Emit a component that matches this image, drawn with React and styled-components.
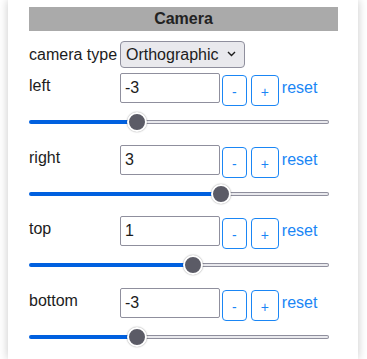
import React, { useState } from "react";
import styled, { createGlobalStyle } from "styled-components";

const GlobalStyle = createGlobalStyle`
  body {
    margin: 0;
    background: #fff;
    font-family: "Segoe UI", "Liberation Sans", Arial, sans-serif;
    font-size: 16px;
    color: #1c1c1c;
  }
`;

const Panel = styled.div`
  box-sizing: border-box;
  width: 350px;
  min-height: 100vh;
  margin-left: 8px;
  padding: 7px 20px 0 21px;
  background: #fff;
  box-shadow: 0 0 9px rgba(0, 0, 0, 0.22);
`;

const Header = styled.div`
  height: 24px;
  line-height: 24px;
  background: #aaaaaa;
  text-align: center;
  font-weight: bold;
  color: #222;
`;

const TypeRow = styled.div`
  display: flex;
  align-items: center;
  margin-top: 10px;
`;

const Label = styled.div`
  width: 91px;
  flex-shrink: 0;
  padding-top: ${(p) => (p.$top ? "4px" : "0")};
`;

const SelectWrap = styled.div`
  position: relative;
  width: 125px;
  height: 27px;
`;

const Select = styled.select`
  appearance: none;
  box-sizing: border-box;
  width: 100%;
  height: 100%;
  padding: 0 0 0 5px;
  border: 1px solid #8f8f9d;
  border-radius: 4px;
  background: #e9e9ed;
  font: inherit;
  color: #1c1c1c;
`;

const Chevron = styled.svg`
  position: absolute;
  right: 9px;
  top: 10px;
  pointer-events: none;
`;

const Param = styled.div`
  margin-top: ${(p) => (p.$first ? "5px" : "0")};
  margin-bottom: 12.5px;
`;

const ParamRow = styled.div`
  display: flex;
  align-items: flex-start;
  height: 33px;
`;

const NumberInput = styled.input`
  box-sizing: border-box;
  width: 100px;
  height: 30px;
  padding: 0 4px;
  border: 1px solid #8f8f9d;
  border-radius: 2px;
  font: inherit;
  color: #1c1c1c;
  outline: none;
`;

const StepButton = styled.button`
  box-sizing: border-box;
  height: 31px;
  margin: 2px 0 0 ${(p) => p.$gap}px;
  padding: 3px 9px 0;
  border: 1px solid #1a86f5;
  border-radius: 4px;
  background: #fff;
  color: #1a86f5;
  font-family: inherit;
  font-size: 14px;
`;

const Reset = styled.a`
  margin-left: 3px;
  line-height: 30px;
  color: #1a86f5;
  text-decoration: none;
  cursor: pointer;
`;

const Slider = styled.input`
  -webkit-appearance: none;
  appearance: none;
  display: block;
  width: 300px;
  height: 20px;
  margin: 6px 0 0;
  background: transparent;

  &::-webkit-slider-runnable-track {
    height: 4px;
    border: 1px solid transparent;
    border-radius: 3px;
    background:
      linear-gradient(to right, #0060df var(--fill), transparent var(--fill)) border-box,
      linear-gradient(#e9e9ed, #e9e9ed) padding-box,
      linear-gradient(#8f8f9d, #8f8f9d) border-box;
  }

  &::-webkit-slider-thumb {
    -webkit-appearance: none;
    width: 20px;
    height: 20px;
    margin-top: -9px;
    box-sizing: border-box;
    border: 2px solid #fff;
    border-radius: 50%;
    background: #5b5b66;
    box-shadow: 0 0 1.5px rgba(0, 0, 0, 0.45);
  }
`;

const MIN = -10;
const MAX = 10;

const initial = [
  { name: "left", value: -3 },
  { name: "right", value: 3 },
  { name: "top", value: 1 },
  { name: "bottom", value: -3 },
];

const ParamControl = ({ name, value, def, first, onChange }) => {
  const ratio = (value - MIN) / (MAX - MIN);
  const fill = ((10 + ratio * 280) / 300) * 100;

  return (
    <Param $first={first}>
      <ParamRow>
        <Label $top>{name}</Label>
        <NumberInput
          type="text"
          value={value}
          onChange={(e) => onChange(Number(e.target.value) || 0)}
        />
        <StepButton $gap={2} onClick={() => onChange(Math.max(MIN, value - 1))}>-</StepButton>
        <StepButton $gap={4} onClick={() => onChange(Math.min(MAX, value + 1))}>+</StepButton>
        <Reset onClick={() => onChange(def)}>reset</Reset>
      </ParamRow>
      <Slider
        type="range"
        min={MIN}
        max={MAX}
        step={1}
        value={value}
        style={{ "--fill": `${fill}%` }}
        onChange={(e) => onChange(Number(e.target.value))}
      />
    </Param>
  );
};

const App = () => {
  const [params, setParams] = useState(initial);
  const [type, setType] = useState("orthographic");

  const update = (i, v) => {
    setParams(params.map((p, j) => (j === i ? { ...p, value: v } : p)));
  };

  return (
    <>
      <GlobalStyle />
      <Panel>
        <Header>Camera</Header>
        <TypeRow>
          <Label>camera type</Label>
          <SelectWrap>
            <Select value={type} onChange={(e) => setType(e.target.value)}>
              <option value="perspective">Perspective</option>
              <option value="orthographic">Orthographic</option>
            </Select>
            <Chevron width="9" height="6" viewBox="0 0 9 6">
              <path d="M1 1l3.5 3.5L8 1" fill="none" stroke="#1c1c1c" strokeWidth="1.4" />
            </Chevron>
          </SelectWrap>
        </TypeRow>
        {params.map((p, i) => (
          <ParamControl
            key={p.name}
            name={p.name}
            value={p.value}
            def={initial[i].value}
            first={i === 0}
            onChange={(v) => update(i, v)}
          />
        ))}
      </Panel>
    </>
  );
};

export default App;
